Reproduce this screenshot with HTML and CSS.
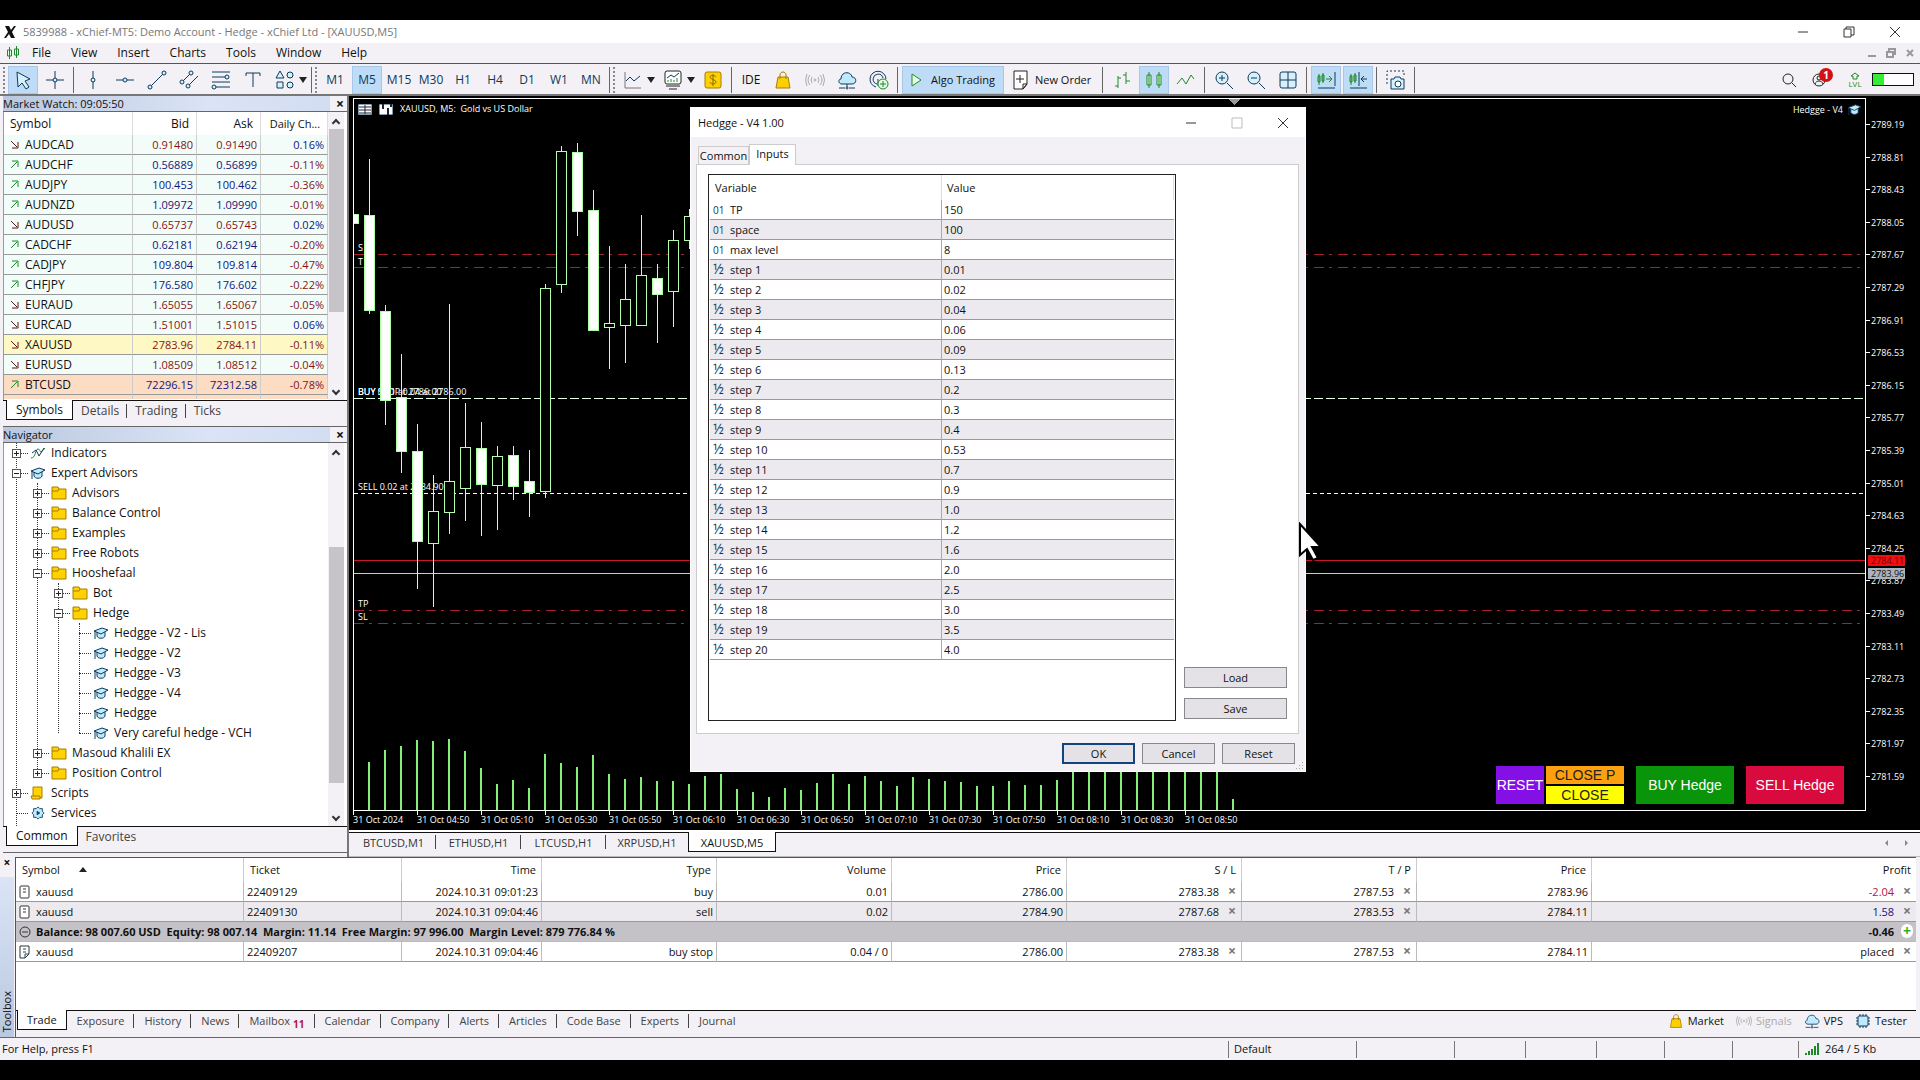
FILE: index.html
```
<!DOCTYPE html>
<html lang="en">
<head>
    <meta charset="UTF-8">
    <meta name="viewport" content="width=device-width, initial-scale=1.0">
    <title>5839988 - xChief-MT5: Demo Account - Hedge</title>
    <link rel="stylesheet" href="styles.css">
</head>
<body>
    <!-- Icon sprite -->
    <svg class="sprite" aria-hidden="true">
        <symbol id="i-logo" viewBox="0 0 12 14"><path d="M1 1h4l2 4 3-4h2L8 7l3 6H7L5 9l-3 4H0l4-6z" fill="#111"/></symbol>
        <symbol id="i-candles" viewBox="0 0 14 14"><path d="M3.500 1v12M10.500 0v12M1.500 4h4v6h-4zM8.500 3h4v6h-4z" fill="#eafbe8" stroke="#1d8a2a"/></symbol>
        <symbol id="i-cursor" viewBox="0 0 20 20"><path d="M4 2l13 7-5 2 4 6-3 2-4-6-4 4z" fill="#d8f0fb"/></symbol>
        <symbol id="i-cross" viewBox="0 0 20 20"><path d="M10 1v18M1 10h18"/><circle cx="10" cy="10" r="2" fill="#d8f0fb"/></symbol>
        <symbol id="i-vline" viewBox="0 0 20 20"><path d="M10 1v18"/><circle cx="10" cy="10" r="2" fill="#d8f0fb"/></symbol>
        <symbol id="i-hline" viewBox="0 0 20 20"><path d="M1 10h18"/><circle cx="10" cy="10" r="2" fill="#d8f0fb"/></symbol>
        <symbol id="i-trend" viewBox="0 0 20 20"><path d="M4 16L16 4"/><circle cx="3" cy="17" r="2" fill="#d8f0fb"/><circle cx="17" cy="3" r="2" fill="#d8f0fb"/></symbol>
        <symbol id="i-channel" viewBox="0 0 20 20"><path d="M3 12l9-9M8 17L19 6"/><circle cx="3" cy="12" r="2" fill="#d8f0fb"/><circle cx="12" cy="3" r="2" fill="#d8f0fb"/><circle cx="9" cy="16" r="2" fill="#d8f0fb"/></symbol>
        <symbol id="i-fibo" viewBox="0 0 20 20"><path d="M1 2h18M1 7h14M1 12h18M4 17h15"/><circle cx="16" cy="7" r="2" fill="#d8f0fb"/><circle cx="3" cy="17" r="2" fill="#d8f0fb"/></symbol>
        <symbol id="i-text" viewBox="0 0 20 20"><path d="M3 6V3h14v3M10 3v14"/></symbol>
        <symbol id="i-shapes" viewBox="0 0 20 20"><path d="M5 1l4 7H1zM2 12h6v6H2z" fill="#d8f0fb"/><circle cx="15" cy="5" r="3" fill="#d8f0fb"/><circle cx="15" cy="15" r="3" fill="#d8f0fb"/></symbol>
        <symbol id="i-line" viewBox="0 0 20 20"><path d="M2 2v16h16" stroke="#777"/><path d="M3 11l4-4 4 4 6-5"/></symbol>
        <symbol id="i-template" viewBox="0 0 20 20"><rect x="2" y="1" width="16" height="13" rx="2" fill="#fff" stroke="#222"/><path d="M4 8l4-3 3 2 5-4"/><path d="M5 12v-2M8 12V9M11 12v-2M14 12V8" stroke="#1d8a2a"/><path d="M3 16h14M6 19h8" stroke="#222"/></symbol>
        <symbol id="i-dollar" viewBox="0 0 20 20"><rect x="2" y="2" width="16" height="16" rx="2" fill="#ffd000" stroke="#a87c00"/><path d="M13 7c-1-2-6-2-6 0s6 3 6 5-5 3-6 0M10 4v12" stroke="#8a6300"/></symbol>
        <symbol id="i-bag" viewBox="0 0 20 20"><path d="M5 7h10l2 11H3z" fill="#ffd000" stroke="#a87c00"/><path d="M7 9V5c0-4 6-4 6 0v4" stroke="#a87c00"/></symbol>
        <symbol id="i-signal" viewBox="0 0 20 20"><g stroke="#aaa"><circle cx="10" cy="10" r="1"/><path d="M7 7q-2 3 0 6M13 7q2 3 0 6M5 5q-4 5 0 10M15 5q4 5 0 10M2 4q-3 6 0 12M18 4q3 6 0 12"/></g></symbol>
        <symbol id="i-cloud" viewBox="0 0 20 20"><path d="M5 14c-4 0-4-5-1-5 0-8 10-8 11-2 5 0 5 7 0 7z" fill="#bfeafd"/><path d="M10 14v3M2 18h6M12 18h6"/><circle cx="10" cy="18" r="1"/></symbol>
        <symbol id="i-antenna" viewBox="0 0 20 20"><path d="M7 17A8 8 0 1 1 17 9M8 14a5 5 0 1 1 6-6M9 16V9"/><circle cx="14" cy="14" r="5" fill="#e6fbe6" stroke="#1d8a2a"/><path d="M14 11v6M11 14h6" stroke="#1d8a2a"/></symbol>
        <symbol id="i-play" viewBox="0 0 20 20"><path d="M6 4l9 6-9 6z" fill="#eafbe8" stroke="#1d8a2a"/></symbol>
        <symbol id="i-neworder" viewBox="0 0 20 20"><path d="M4 1h13v13l-4 5H4z" fill="#fff" stroke="#222"/><path d="M17 14h-4v5zM10 5v8M6 9h8" stroke="#222"/></symbol>
        <symbol id="i-bars" viewBox="0 0 20 20"><path d="M6 6v12M3 16h3M6 8h3M14 2v12M11 5h3M14 11h4" stroke="#1d8a2a"/></symbol>
        <symbol id="i-candle" viewBox="0 0 20 20"><path d="M5 2v16M15 2v16M3 5h4v10H3zM13 5h4v10h-4z" fill="#eafbe8" stroke="#1d8a2a"/></symbol>
        <symbol id="i-wave" viewBox="0 0 20 20"><path d="M1 14l5-6 4 6 5-9 3 4" stroke="#1d8a2a"/></symbol>
        <symbol id="i-zoomin" viewBox="0 0 20 20"><circle cx="8" cy="8" r="6" fill="#d8f0fb"/><path d="M13 13l6 6M8 5v6M5 8h6"/></symbol>
        <symbol id="i-zoomout" viewBox="0 0 20 20"><circle cx="8" cy="8" r="6" fill="#d8f0fb"/><path d="M13 13l6 6M5 8h6"/></symbol>
        <symbol id="i-grid" viewBox="0 0 20 20"><rect x="2" y="2" width="16" height="16" rx="2" fill="#d8f0fb"/><path d="M10 2v16M2 10h16"/></symbol>
        <symbol id="i-shift" viewBox="0 0 20 20"><path d="M3 4v11M7 3v10M2 6h2v6H2zM6 5h2v6H6zM10 9h6M13 6l3 3-3 3" stroke="#1d8a2a"/><path d="M19 2v14M2 18h17"/></symbol>
        <symbol id="i-scroll" viewBox="0 0 20 20"><path d="M3 4v11M7 3v10M2 6h2v6H2zM6 5h2v6H6z" stroke="#1d8a2a"/><path d="M11 2v14M13 9h6M16 6l-3 3 3 3M2 18h17"/></symbol>
        <symbol id="i-camera" viewBox="0 0 20 20"><path d="M1 14V1h17v5" stroke-dasharray="2 2"/><path d="M5 9h3l1-2h5l1 2h3v10H5z" fill="#d8f0fb"/><circle cx="12" cy="14" r="3" fill="#fff"/></symbol>
        <symbol id="i-search" viewBox="0 0 16 16"><circle cx="7" cy="7" r="5" stroke="#222"/><path d="M11 11l4 4" stroke="#222"/></symbol>
        <symbol id="i-user" viewBox="0 0 16 16"><g stroke="#222"><circle cx="8" cy="8" r="6"/><circle cx="8" cy="6" r="2"/><path d="M4 12c1-4 7-4 8 0"/></g></symbol>
        <symbol id="i-level" viewBox="0 0 12 8"><path d="M4 7V4H2l4-3 4 3H8v3z" stroke="#1d8a2a"/></symbol>
        <symbol id="i-hat" viewBox="0 0 16 14"><path d="M4 6v4c1 3 7 3 8 0V6" fill="#bfeafd"/><path d="M1 5l8-3 6 2-7 4z" fill="#bfeafd"/><path d="M2 5v6M1 12h2"/></symbol>
        <symbol id="i-folder" viewBox="0 0 16 14"><path d="M1 1h6l1 2h7v10H1z" fill="#ffd200" stroke="#a87c00"/><path d="M1 5h6l1-2" stroke="#a87c00"/></symbol>
        <symbol id="i-indicator" viewBox="0 0 16 14"><path d="M1 12c5 0 4-9 7-9s1 7 7-1" stroke="#1d8a2a"/><path d="M2 7l4-3 3 6 5-8"/></symbol>
        <symbol id="i-script" viewBox="0 0 16 14"><path d="M3 1h9v11H3z" fill="#ffd200" stroke="#a87c00"/><path d="M1 10h9v3H2z" fill="#ffd200" stroke="#a87c00"/></symbol>
        <symbol id="i-gear" viewBox="0 0 16 16"><path d="M8 1l2 2h3v3l2 2-2 2v3h-3l-2 2-2-2H3v-3L1 8l2-2V3h3z" fill="#bfeafd"/><path d="M7 6l3 2-3 2z" fill="#14466b"/></symbol>
        <symbol id="i-chip" viewBox="0 0 16 16"><rect x="3" y="3" width="10" height="10" rx="1" fill="#bfeafd"/><path d="M5 3V1M8 3V1M11 3V1M5 15v-2M8 15v-2M11 15v-2M3 5H1M3 8H1M3 11H1M15 5h-2M15 8h-2M15 11h-2"/></symbol>
        <symbol id="i-doc" viewBox="0 0 12 14"><rect x="1" y="1" width="9" height="12" rx="1" fill="#fff" stroke="#333"/><path d="M4 4h3M4 7h3" stroke="#333"/></symbol>
        <symbol id="i-docpen" viewBox="0 0 12 14"><path d="M1 1h9v8l-4 4H1z" fill="#fff" stroke="#333"/><path d="M4 4h3M4 7h3M10 9H6v4" stroke="#14466b"/></symbol>
        <symbol id="i-up" viewBox="0 0 9 9"><path d="M1 8l6-6M2 1h6v6" stroke="#1d8a2a"/></symbol>
        <symbol id="i-down" viewBox="0 0 9 9"><path d="M1 1l6 6M8 2v6H2" stroke="#5c1414"/></symbol>
        <symbol id="i-signalbars" viewBox="0 0 16 12"><path d="M1 12v-2M4 12V8M7 12V6M10 12V3M13 12V0" stroke="#1d8a2a" stroke-width="2"/></symbol>
    </svg>

    <header class="titlebar">
        <svg class="ic12"><use href="#i-logo"/></svg>
        <span class="title">5839988 - xChief-MT5: Demo Account - Hedge - xChief Ltd - [XAUUSD,M5]</span>
        <div class="win-buttons">
            <button aria-label="Minimize"><svg viewBox="0 0 12 12"><path d="M1 6h10"/></svg></button>
            <button aria-label="Restore"><svg viewBox="0 0 12 12"><path d="M1 3h7v8H1zM3 3V1h8v8H8"/></svg></button>
            <button aria-label="Close"><svg viewBox="0 0 12 12"><path d="M1 1l10 10M11 1L1 11"/></svg></button>
        </div>
    </header>

    <nav class="menubar">
        <svg class="ic14"><use href="#i-candles"/></svg>
        <button>File</button>
        <button>View</button>
        <button>Insert</button>
        <button>Charts</button>
        <button>Tools</button>
        <button>Window</button>
        <button>Help</button>
        <div class="win-buttons small">
            <button aria-label="Minimize chart"><svg viewBox="0 0 12 12"><path d="M2 9h8"/></svg></button>
            <button aria-label="Restore chart"><svg viewBox="0 0 12 12"><path d="M2 5h6v5H2zM4 4V2h6v6"/></svg></button>
            <button aria-label="Close chart"><svg viewBox="0 0 12 12"><path d="M3 3l6 6M9 3L3 9"/></svg></button>
        </div>
    </nav>

    <div class="toolbar">
        <i class="grip first"></i>
        <button class="tool on" aria-label="Cursor"><svg><use href="#i-cursor"/></svg></button>
        <button class="tool" aria-label="Crosshair"><svg><use href="#i-cross"/></svg></button>
        <i class="sep"></i>
        <button class="tool" aria-label="Vertical line"><svg><use href="#i-vline"/></svg></button>
        <button class="tool" aria-label="Horizontal line"><svg><use href="#i-hline"/></svg></button>
        <button class="tool" aria-label="Trendline"><svg><use href="#i-trend"/></svg></button>
        <button class="tool" aria-label="Channel"><svg><use href="#i-channel"/></svg></button>
        <button class="tool" aria-label="Fibonacci"><svg><use href="#i-fibo"/></svg></button>
        <button class="tool" aria-label="Text"><svg><use href="#i-text"/></svg></button>
        <button class="tool split" aria-label="Shapes"><svg><use href="#i-shapes"/></svg></button>
        <i class="grip"></i>
        <button class="tool">M1</button>
        <button class="tool on">M5</button>
        <button class="tool">M15</button>
        <button class="tool">M30</button>
        <button class="tool">H1</button>
        <button class="tool">H4</button>
        <button class="tool">D1</button>
        <button class="tool">W1</button>
        <button class="tool">MN</button>
        <i class="grip"></i>
        <button class="tool split" aria-label="Indicators"><svg><use href="#i-line"/></svg></button>
        <button class="tool split" aria-label="Templates"><svg><use href="#i-template"/></svg></button>
        <button class="tool" aria-label="Deposit"><svg><use href="#i-dollar"/></svg></button>
        <i class="sep"></i>
        <button class="tool dark">IDE</button>
        <button class="tool" aria-label="Market"><svg><use href="#i-bag"/></svg></button>
        <button class="tool" aria-label="Signals"><svg><use href="#i-signal"/></svg></button>
        <button class="tool" aria-label="VPS"><svg><use href="#i-cloud"/></svg></button>
        <button class="tool" aria-label="Community"><svg><use href="#i-antenna"/></svg></button>
        <i class="sep"></i>
        <button class="tool wide on"><svg><use href="#i-play"/></svg>Algo Trading</button>
        <button class="tool wide"><svg><use href="#i-neworder"/></svg>New Order</button>
        <i class="sep"></i>
        <button class="tool" aria-label="Bars"><svg><use href="#i-bars"/></svg></button>
        <button class="tool on" aria-label="Candlesticks"><svg><use href="#i-candle"/></svg></button>
        <button class="tool" aria-label="Line"><svg><use href="#i-wave"/></svg></button>
        <i class="sep"></i>
        <button class="tool" aria-label="Zoom in"><svg><use href="#i-zoomin"/></svg></button>
        <button class="tool" aria-label="Zoom out"><svg><use href="#i-zoomout"/></svg></button>
        <button class="tool" aria-label="Tile windows"><svg><use href="#i-grid"/></svg></button>
        <i class="sep"></i>
        <button class="tool on" aria-label="Shift chart"><svg><use href="#i-shift"/></svg></button>
        <button class="tool on" aria-label="Auto scroll"><svg><use href="#i-scroll"/></svg></button>
        <i class="sep"></i>
        <button class="tool" aria-label="Screenshot"><svg><use href="#i-camera"/></svg></button>
        <i class="sep"></i>
        <div class="toolbar-right">
            <button class="plain" aria-label="Search"><svg class="ic16"><use href="#i-search"/></svg></button>
            <button class="plain account" aria-label="Account"><svg class="ic16"><use href="#i-user"/></svg><b class="badge">1</b></button>
            <span class="level"><svg><use href="#i-level"/></svg>LVL</span>
            <span class="battery"></span>
        </div>
    </div>

    <main class="workspace">
        <aside class="side">
            <section class="panel market">
                <div class="panel-title"><span>Market Watch: 09:05:50</span><button aria-label="Close">×</button></div>
                <div class="panel-body">
                    <table class="quotes">
                        <thead><tr><th>Symbol</th><th>Bid</th><th>Ask</th><th>Daily Ch...</th></tr></thead>
                        <tbody id="quotes"></tbody>
                    </table>
                    <div class="scrollbar"><i class="arrow up"></i><i class="thumb"></i><i class="arrow down"></i></div>
                </div>
                <div class="tabs"><button class="active">Symbols</button><button>Details</button><button>Trading</button><button>Ticks</button></div>
            </section>
            <section class="panel navigator">
                <div class="panel-title"><span>Navigator</span><button aria-label="Close">×</button></div>
                <div class="panel-body">
                    <ul class="tree" id="tree"></ul>
                    <div class="scrollbar"><i class="arrow up"></i><i class="thumb"></i><i class="arrow down"></i></div>
                </div>
                <div class="tabs"><button class="active">Common</button><button>Favorites</button></div>
            </section>
        </aside>

        <section class="chart-area">
            <div class="chart">
                <div class="plot">
                    <svg class="candles" id="candles">
                        <text x="4" y="152">S</text>
                        <text x="4" y="166">T</text>
                        <text x="4" y="296">BUY 0.01 at 2786.00</text>
                        <text x="4" y="296">BUY STOP 0.04 at 2786.00</text>
                        <text x="4" y="391">SELL 0.02 at 2784.90</text>
                        <text x="4" y="508">TP</text>
                        <text x="4" y="521">SL</text>
                        <line class="stop" x1="0" x2="100%" y1="155" y2="155"/>
                        <line class="stop" x1="0" x2="100%" y1="168" y2="168"/>
                        <line class="buy" x1="0" x2="100%" y1="299" y2="299"/>
                        <line class="sell" x1="0" x2="100%" y1="394" y2="394"/>
                        <line class="ask" x1="0" x2="100%" y1="461" y2="461"/>
                        <line class="bid" x1="0" x2="100%" y1="474" y2="474"/>
                        <line class="stop" x1="0" x2="100%" y1="511" y2="511"/>
                        <line class="stop" x1="0" x2="100%" y1="524" y2="524"/>
                        <path d="M874 0h12l-6 6z" fill="#999"/>
                    </svg>
                    <div class="volumes" id="volumes"></div>
                    <div class="chart-name">
                        <svg viewBox="0 0 14 11"><rect width="14" height="11" fill="#fff"/><path d="M1 3h12M1 6h12M1 9h12M7 1v9" stroke="#223"/></svg>
                        <svg viewBox="0 0 14 11"><rect width="14" height="11" fill="#fff"/><path d="M4 0v5M9 4v7M12 0v3" stroke="#223" stroke-width="2"/></svg>
                        <span>XAUUSD, M5:&nbsp; Gold vs US Dollar</span>
                    </div>
                    <div class="expert-name">Hedgge - V4 <svg><use href="#i-hat"/></svg></div>
                    <div class="trade-buttons">
                        <button class="reset">RESET</button>
                        <div class="stack">
                            <button class="close-p">CLOSE P</button>
                            <button class="close-all">CLOSE</button>
                        </div>
                        <button class="big buy-btn">BUY Hedge</button>
                        <button class="big sell-btn">SELL Hedge</button>
                    </div>
                </div>
                <div class="prices" id="prices"></div>
                <div class="times" id="times"></div>
            </div>

            <div class="chart-tabs">
                <button>BTCUSD,M1</button><button>ETHUSD,H1</button><button>LTCUSD,H1</button><button>XRPUSD,H1</button><button class="active">XAUUSD,M5</button>
                <div class="tab-arrows"><i class="left"></i><i class="right"></i></div>
            </div>

            <!-- Expert properties window -->
            <div class="dialog" role="dialog" aria-labelledby="dialogTitle">
                <div class="dialog-title">
                    <span id="dialogTitle">Hedgge - V4 1.00</span>
                    <div class="win-buttons">
                        <button aria-label="Minimize"><svg viewBox="0 0 12 12"><path d="M1 6h10"/></svg></button>
                        <button aria-label="Maximize" disabled><svg viewBox="0 0 12 12"><path d="M1 1h10v10H1z"/></svg></button>
                        <button aria-label="Close"><svg viewBox="0 0 12 12"><path d="M1 1l10 10M11 1L1 11"/></svg></button>
                    </div>
                </div>
                <div class="dialog-tabs"><button>Common</button><button class="active">Inputs</button></div>
                <div class="dialog-pane">
                    <div class="inputs-box">
                        <table class="inputs">
                            <thead><tr><th>Variable</th><th>Value</th></tr></thead>
                            <tbody id="inputs"></tbody>
                        </table>
                    </div>
                    <div class="pane-buttons"><button class="btn">Load</button><button class="btn">Save</button></div>
                </div>
                <div class="dialog-footer">
                    <button class="btn default">OK</button><button class="btn">Cancel</button><button class="btn">Reset</button>
                </div>
                <i class="resize"></i>
            </div>
            <svg class="pointer" viewBox="0 0 24 40"><path d="M2 2v31l7-6 6 11 5-2-6-11h9z" fill="#fff" stroke="#000" stroke-width="2"/></svg>
        </section>
    </main>

    <section class="toolbox">
        <div class="toolbox-title"><button aria-label="Close">×</button><span>Toolbox</span></div>
        <div class="toolbox-body">
            <table class="trades">
                <colgroup><col class="c-symbol"><col class="c-ticket"><col class="c-time"><col class="c-num"><col class="c-num"><col class="c-num"><col class="c-num"><col class="c-num"><col class="c-num"><col></colgroup>
                <thead><tr><th>Symbol <i class="sort"></i></th><th>Ticket</th><th>Time</th><th>Type</th><th>Volume</th><th>Price</th><th>S / L</th><th>T / P</th><th>Price</th><th>Profit</th></tr></thead>
                <tbody>
                    <tr><td><svg><use href="#i-doc"/></svg>xauusd</td><td>22409129</td><td>2024.10.31 09:01:23</td><td>buy</td><td>0.01</td><td>2786.00</td><td>2783.38 <button>×</button></td><td>2787.53 <button>×</button></td><td>2783.96</td><td><span class="neg">-2.04</span> <button>×</button></td></tr>
                    <tr class="alt"><td><svg><use href="#i-doc"/></svg>xauusd</td><td>22409130</td><td>2024.10.31 09:04:46</td><td>sell</td><td>0.02</td><td>2784.90</td><td>2787.68 <button>×</button></td><td>2783.53 <button>×</button></td><td>2784.11</td><td><span class="pos">1.58</span> <button>×</button></td></tr>
                    <tr class="balance"><td colspan="9"><svg viewBox="0 0 12 14"><circle cx="6" cy="7" r="5" stroke="#333"/><path d="M3 7h6" stroke="#333"/></svg>Balance: 98 007.60 USD&nbsp; Equity: 98 007.14&nbsp; Margin: 11.14&nbsp; Free Margin: 97 996.00&nbsp; Margin Level: 879 776.84 %</td><td>-0.46 <button class="add">+</button></td></tr>
                    <tr><td><svg><use href="#i-docpen"/></svg>xauusd</td><td>22409207</td><td>2024.10.31 09:04:46</td><td>buy stop</td><td>0.04 / 0</td><td>2786.00</td><td>2783.38 <button>×</button></td><td>2787.53 <button>×</button></td><td>2784.11</td><td>placed <button>×</button></td></tr>
                </tbody>
            </table>
            <div class="tabs">
                <button class="active">Trade</button><button>Exposure</button><button>History</button><button>News</button><button>Mailbox<sub>11</sub></button><button>Calendar</button><button>Company</button><button>Alerts</button><button>Articles</button><button>Code Base</button><button>Experts</button><button>Journal</button>
                <div class="services">
                    <a href="#"><svg><use href="#i-bag"/></svg>Market</a>
                    <a href="#" class="off"><svg><use href="#i-signal"/></svg>Signals</a>
                    <a href="#"><svg><use href="#i-cloud"/></svg>VPS</a>
                    <a href="#"><svg><use href="#i-chip"/></svg>Tester</a>
                </div>
            </div>
        </div>
    </section>

    <footer class="statusbar">
        <span class="help">For Help, press F1</span>
        <span class="profile">Default</span>
        <span class="cell w98"></span><span class="cell w71"></span><span class="cell w71"></span><span class="cell w68"></span><span class="cell w68"></span><span class="cell w66"></span>
        <span class="traffic"><svg><use href="#i-signalbars"/></svg>264 / 5 Kb</span>
    </footer>

    <script>
        // symbol, direction, bid, ask, daily change, row highlight
        const quotes = [
            ['AUDCAD', 'down', '0.91480', '0.91490', '0.16%'],
            ['AUDCHF', 'up', '0.56889', '0.56899', '-0.11%'],
            ['AUDJPY', 'up', '100.453', '100.462', '-0.36%'],
            ['AUDNZD', 'up', '1.09972', '1.09990', '-0.01%'],
            ['AUDUSD', 'down', '0.65737', '0.65743', '0.02%'],
            ['CADCHF', 'up', '0.62181', '0.62194', '-0.20%'],
            ['CADJPY', 'up', '109.804', '109.814', '-0.47%'],
            ['CHFJPY', 'up', '176.580', '176.602', '-0.22%'],
            ['EURAUD', 'down', '1.65055', '1.65067', '-0.05%'],
            ['EURCAD', 'down', '1.51001', '1.51015', '0.06%'],
            ['XAUUSD', 'down', '2783.96', '2784.11', '-0.11%', 'gold'],
            ['EURUSD', 'down', '1.08509', '1.08512', '-0.04%'],
            ['BTCUSD', 'up', '72296.15', '72312.58', '-0.78%', 'crypto']
        ];
        document.getElementById('quotes').innerHTML = quotes.map(([name, dir, bid, ask, change, mark]) => `
            <tr class="${mark || ''}">
                <td><svg><use href="#i-${dir}"/></svg>${name}</td>
                <td class="${dir}">${bid}</td><td class="${dir}">${ask}</td>
                <td class="${change[0] === '-' ? 'down' : 'up'}">${change}</td>
            </tr>`).join('') + '<tr class="crypto rest"><td></td><td></td><td></td><td></td></tr>';

        // Navigator tree: name, icon, children (null = collapsed, undefined = leaf)
        const tree = [
            ['Indicators', 'indicator', null],
            ['Expert Advisors', 'hat', [
                ['Advisors', 'folder', null],
                ['Balance Control', 'folder', null],
                ['Examples', 'folder', null],
                ['Free Robots', 'folder', null],
                ['Hooshefaal', 'folder', [
                    ['Bot', 'folder', null],
                    ['Hedge', 'folder', [
                        ['Hedgge - V2 - Lis', 'hat'],
                        ['Hedgge - V2', 'hat'],
                        ['Hedgge - V3', 'hat'],
                        ['Hedgge - V4', 'hat'],
                        ['Hedgge', 'hat'],
                        ['Very careful hedge - VCH', 'hat']
                    ]]
                ]],
                ['Masoud Khalili EX', 'folder', null],
                ['Position Control', 'folder', null]
            ]],
            ['Scripts', 'script', null],
            ['Services', 'gear']
        ];
        function renderNodes(nodes) {
            return nodes.map(([name, icon, children]) => {
                const toggle = children === undefined ? '<i class="leaf"></i>'
                    : `<button class="toggle ${children ? 'open' : ''}" aria-label="Toggle ${name}"></button><i class="dots"></i>`;
                const sub = children ? `<ul>${renderNodes(children)}</ul>` : '';
                return `<li><div class="node">${toggle}<svg><use href="#i-${icon}"/></svg>${name}</div>${sub}</li>`;
            }).join('');
        }
        document.getElementById('tree').innerHTML = renderNodes(tree);

        // Expert inputs
        const ints = [['TP', 150], ['space', 100], ['max level', 8]];
        const steps = ['0.01', '0.02', '0.04', '0.06', '0.09', '0.13', '0.2', '0.3', '0.4', '0.53', '0.7', '0.9', '1.0', '1.2', '1.6', '2.0', '2.5', '3.0', '3.5', '4.0'];
        document.getElementById('inputs').innerHTML =
            ints.map(([n, v]) => `<tr><td><i class="type">01</i>${n}</td><td>${v}</td></tr>`).join('') +
            steps.map((v, i) => `<tr><td><i class="type half">½</i>step ${i + 1}</td><td>${v}</td></tr>`).join('');

        // Candles: high, body top, body bottom, low, filled
        const STEP = 16;
        const candles = [
            [115, 115, 124, 124, 1], [60, 116, 211, 215, 1], [206, 212, 301, 326, 1], [255, 298, 352, 374, 1],
            [325, 352, 442, 490, 1], [376, 412, 444, 508, 0], [205, 382, 413, 435, 0], [304, 348, 389, 422, 0],
            [323, 349, 385, 437, 1], [347, 357, 386, 431, 0], [347, 356, 387, 401, 1], [351, 382, 393, 418, 1],
            [185, 189, 392, 399, 0], [47, 52, 185, 194, 0], [44, 53, 112, 137, 1], [91, 111, 231, 232, 1],
            [147, 224, 228, 270, 0], [165, 200, 226, 264, 0], [116, 176, 226, 226, 0], [165, 179, 195, 244, 1],
            [131, 141, 192, 228, 0], [110, 117, 141, 150, 0]
        ];
        document.getElementById('candles').innerHTML += candles.map(([h, t, b, l, filled], i) => {
            const x = (i - 1) * STEP + 15;
            return `<path class="wick" d="M${x} ${h}V${l}"/><rect class="${filled ? 'bear' : 'bull'}" x="${x - 5}" y="${t}" width="10" height="${b - t}"/>`;
        }).join('');

        const volumes = [48, 60, 64, 70, 69, 71, 59, 42, 26, 30, 22, 56, 47, 43, 55, 36, 31, 33, 29, 29, 26,
            34, 36, 21, 18, 13, 22, 20, 27, 36, 26, 34, 29, 24, 33, 31, 29, 28, 24, 24, 29, 25, 25, 30,
            45, 48, 52, 44, 50, 47, 55, 49, 46, 42, 11];
        document.getElementById('volumes').innerHTML = volumes.map(v => `<i style="height:${v}px"></i>`).join('');

        // Price scale
        let prices = '';
        for (let i = 0; i < 21; i++) prices += `<span>${(2789.19 - i * 0.38).toFixed(2)}</span>`;
        document.getElementById('prices').innerHTML = prices + '<b class="tag ask-tag">2784.11</b><b class="tag bid-tag">2783.96</b>';

        // Time scale, one label every 20 minutes
        let times = '<span>31 Oct 2024</span>';
        for (let m = 290; m <= 530; m += 20) {
            times += `<span>31 Oct 0${Math.floor(m / 60)}:${String(m % 60).padStart(2, '0')}</span>`;
        }
        document.getElementById('times').innerHTML = times;
    </script>
</body>
</html>
```
FILE: styles.css
```
* {
    box-sizing: border-box;
}
body {
    margin: 0;
    padding: 20px 0;
    min-height: 100vh;
    display: flex;
    flex-direction: column;
    background: #000;
    color: #111;
    font-family: "Open Sans", "Noto Sans", sans-serif;
    font-size: 11px;
    line-height: 16px;
    overflow-x: hidden;
}
button {
    font: inherit;
    color: inherit;
    background: none;
    border: 0;
    padding: 0;
    white-space: nowrap;
}
svg {
    fill: none;
    stroke: #0c3a5c;
    flex: none;
}
i {
    font-style: normal;
}
table {
    border-collapse: separate;
    border-spacing: 0;
    table-layout: fixed;
}
th {
    font-weight: normal;
    white-space: nowrap;
}
.sprite {
    position: absolute;
    width: 0;
    height: 0;
}
.ic12 { width: 12px; height: 14px; stroke: none; }
.ic14 { width: 14px; height: 14px; }
.ic16 { width: 16px; height: 16px; }

/* Title bar and menu */
.titlebar {
    height: 23px;
    background: #fff;
    display: flex;
    align-items: center;
    padding: 0 19px 0 4px;
    gap: 7px;
    color: #777;
}
.win-buttons {
    margin-left: auto;
    display: flex;
    gap: 34px;
}
.win-buttons svg {
    display: block;
    width: 12px;
    height: 12px;
    stroke: #333;
}
.win-buttons button:disabled svg {
    stroke: #bbb;
}
.menubar {
    height: 21px;
    background: #f3f1f5;
    border-bottom: 1px solid #555;
    display: flex;
    align-items: center;
    gap: 20px;
    padding: 0 4px 0 6px;
    font-size: 12px;
}
.menubar > svg {
    margin-right: -8px;
}
.win-buttons.small {
    gap: 7px;
}
.win-buttons.small svg {
    stroke: #999;
    stroke-width: 2;
}

/* Toolbar */
.toolbar {
    height: 32px;
    background: #f3f1f5;
    border-bottom: 2px solid #777;
    padding-top: 1px;
    display: flex;
    align-items: center;
    gap: 4px;
    color: #0c3a5c;
}
.tool {
    width: 28px;
    height: 26px;
    flex: none;
    display: flex;
    align-items: center;
    justify-content: center;
    font-size: 12px;
}
.tool svg {
    width: 20px;
    height: 20px;
}
.tool.on {
    background: #bfdcf7;
    outline: 1px solid #a5c8ec;
}
.tool.dark {
    color: #111;
}
.tool.split {
    width: 36px;
    padding-left: 4px;
    justify-content: flex-start;
    gap: 4px;
}
.tool.split::after {
    content: "";
    border: 4px solid transparent;
    border-top: 6px solid #222;
    border-bottom: 0;
}
.tool.wide {
    width: 100px;
    gap: 5px;
    color: #111;
    font-size: 11px;
    justify-content: flex-start;
    padding-left: 3px;
}
.tool.wide + .wide {
    width: 91px;
}
.sep {
    width: 1px;
    height: 26px;
    margin-right: 1px;
    background: #666;
}
.grip {
    width: 6px;
    height: 26px;
    border-left: 1px solid #666;
    border-right: 2px dotted #888;
}
.grip.first {
    border-left: 0;
    width: 5px;
}
.toolbar-right {
    margin-left: auto;
    display: flex;
    align-items: center;
    gap: 14px;
    padding-right: 6px;
}
.plain svg {
    display: block;
}
.account {
    position: relative;
}
.badge {
    position: absolute;
    left: 8px;
    top: -4px;
    width: 14px;
    height: 14px;
    border-radius: 7px;
    background: #d01212;
    color: #fff;
    font-size: 10px;
    line-height: 14px;
}
.level {
    display: flex;
    flex-direction: column;
    align-items: center;
    font-size: 8px;
    line-height: 8px;
    color: #1d8a2a;
    width: 16px;
    margin-left: 6px;
}
.level svg {
    width: 12px;
    height: 8px;
}
.battery {
    width: 42px;
    height: 13px;
    margin-left: -5px;
    border: 1px solid #111;
    background: linear-gradient(90deg, #33ee33 28%, #fff 28%);
}

/* Workspace */
.workspace {
    flex: 1;
    display: flex;
    background: #f3f1f5;
}
.side {
    width: 349px;
    flex: none;
    display: flex;
    flex-direction: column;
    border-right: 2px solid #777;
    padding: 0 0 4px 3px;
}
.panel {
    display: flex;
    flex-direction: column;
}
.market {
    height: 331px;
    border-bottom: 1px solid #666;
}
.navigator {
    flex: 1;
    border-bottom: 1px solid #666;
}
.panel-title {
    height: 16px;
    display: flex;
    align-items: center;
    justify-content: space-between;
    padding-right: 3px;
    background: linear-gradient(90deg, #b9c8e0, #dbe4f6 60%, #d3ddf2 95%, #f3f1f5 95%);
    border-bottom: 1px solid #666;
}
.panel-title button {
    font-size: 14px;
    line-height: 14px;
    font-weight: bold;
}
.panel-body {
    flex: 1;
    display: flex;
    overflow: hidden;
    background: #fff;
    border-left: 1px solid #999;
    padding-right: 3px;
}
.scrollbar {
    width: 16px;
    margin-left: auto;
    background: #f3f1f5;
    display: flex;
    flex-direction: column;
    align-items: center;
}
.scrollbar .arrow {
    width: 6px;
    height: 6px;
    border: solid #333;
    border-width: 2px 0 0 2px;
    transform: rotate(45deg);
    margin: 8px 0 3px;
}
.scrollbar .arrow.down {
    transform: rotate(225deg);
    margin: auto 0 6px;
}
.thumb {
    width: 15px;
    background: #c6c4c8;
}
.market .thumb {
    height: 183px;
}
.navigator .thumb {
    height: 236px;
    margin-top: 87px;
}
.quotes {
    width: 325px;
    align-self: flex-start;
}
.quotes th {
    height: 23px;
    font-size: 12px;
    text-align: right;
    padding: 0 7px 0 0;
    border-right: 1px solid #ddd;
}
.quotes th:first-child {
    width: 129px;
    text-align: left;
    padding-left: 6px;
}
.quotes th:nth-child(2),
.quotes th:nth-child(3) {
    width: 64px;
}
.quotes th:last-child {
    font-size: 11px;
}
.quotes td {
    height: 20px;
    padding: 0 3px;
    text-align: right;
    background: #f2fdf9;
    border-right: 1px solid #ccc;
    border-bottom: 1px solid #999;
}
.quotes td:first-child {
    text-align: left;
    font-size: 12px;
    padding-left: 6px;
}
.quotes .gold td { background: #fdf8c4; }
.quotes .crypto td { background: #fddcc4; }
.quotes .rest td { height: 4px; border-bottom: 0; }
.quotes svg {
    width: 9px;
    height: 9px;
    margin-right: 6px;
}
.quotes .up { color: #14147c; }
.quotes .down { color: #861414; }

/* Tab strips under the panels */
.tabs {
    height: 26px;
    display: flex;
    align-items: flex-start;
    border-top: 1px solid #111;
    padding-left: 3px;
    color: #444;
    font-size: 12px;
}
.tabs button {
    height: 20px;
    padding: 0 9px;
    position: relative;
}
.side .tabs button:not(.active) {
    padding: 0 8px;
}
.tabs button + button:not(:last-of-type)::after,
.toolbox .tabs button:not(.active)::after {
    content: "";
    position: absolute;
    right: 0;
    top: 3px;
    height: 14px;
    border-right: 1px solid #444;
}
.toolbox .tabs button:last-of-type::after {
    display: none;
}
.tabs button.active {
    background: #fff;
    color: #111;
    border: 1px solid #111;
    border-top: 0;
    margin-top: -1px;
}

/* Navigator tree */
.tree,
.tree ul {
    list-style: none;
    margin: 0;
    padding: 0;
    position: relative;
}
.tree {
    font-size: 12px;
    flex: 1;
}
.tree ul {
    margin-left: 21px;
}
.tree::before,
.tree ul::before {
    content: "";
    position: absolute;
    left: 12px;
    top: 0;
    bottom: 0;
    border-left: 1px dotted #333;
}
.tree ul::before {
    bottom: 10px;
}
.node {
    height: 20px;
    display: flex;
    align-items: center;
    padding-left: 8px;
    white-space: nowrap;
}
.node svg {
    width: 16px;
    height: 14px;
    margin: 0 5px 0 2px;
}
.toggle {
    position: relative;
    width: 9px;
    height: 9px;
    border: 1px solid #555;
    background: linear-gradient(#222, #222) 1px 3px / 5px 1px no-repeat, #fff;
}
.toggle:not(.open) {
    background: linear-gradient(#222, #222) 1px 3px / 5px 1px no-repeat, linear-gradient(#222, #222) 3px 1px / 1px 5px no-repeat, #fff;
}
.dots {
    width: 7px;
    border-top: 1px dotted #333;
}
.leaf {
    width: 12px;
    margin-left: 4px;
    border-top: 1px dotted #333;
}

/* Chart */
.chart-area {
    flex: 1;
    min-width: 0;
    display: flex;
    flex-direction: column;
    position: relative;
}
.chart {
    flex: 1;
    display: grid;
    grid-template-columns: 1fr 52px;
    grid-template-rows: 1fr 19px;
    background: #000;
    color: #fff;
    padding: 2px 2px 0 4px;
    font-size: 9px;
    line-height: 12px;
}
.plot {
    position: relative;
    border: 1px solid #fff;
    overflow: hidden;
}
.candles {
    display: block;
    width: 100%;
    height: 100%;
    position: absolute;
    shape-rendering: crispEdges;
}
.candles text {
    fill: #fff;
    stroke: none;
}
.candles path:not(.wick) { stroke: none; }
.candles .stop { stroke: #a82234; stroke-dasharray: 10 5 3 6; }
.candles .buy { stroke: #e8ffe8; stroke-dasharray: 9 3; }
.candles .sell { stroke: #fff; stroke-dasharray: 4 3; }
.candles .ask { stroke: #c81828; }
.candles .bid { stroke: #c4d0d0; }
.wick { stroke: #c4ffbe; }
.bear { fill: #fff; stroke: #a8ffa0; }
.bull { fill: #000; stroke: #b4ffae; }
.volumes {
    position: absolute;
    left: 14px;
    bottom: 0;
    display: flex;
    align-items: flex-end;
    gap: 14px;
}
.volumes i {
    width: 2px;
    background: #84f078;
}
.chart-name {
    position: absolute;
    left: 4px;
    top: 4px;
    display: flex;
    align-items: center;
    gap: 7px;
}
.chart-name svg {
    width: 14px;
    height: 11px;
}
.expert-name {
    position: absolute;
    right: 3px;
    top: 4px;
    display: flex;
    align-items: center;
    gap: 4px;
}
.expert-name svg {
    width: 15px;
    height: 13px;
}
.prices {
    position: relative;
    display: flex;
    flex-direction: column;
    justify-content: space-between;
    padding: 21px 0 28px;
}
.prices span::before {
    content: "";
    display: inline-block;
    width: 4px;
    margin-right: 1px;
    vertical-align: 3px;
    border-top: 1px solid #fff;
}
.tag {
    position: absolute;
    left: 2px;
    width: 37px;
    padding-left: 3px;
    height: 11px;
    line-height: 11px;
    font-weight: normal;
    color: #111;
}
.ask-tag { top: 457px; background: #ee1010; color: #700; }
.bid-tag { top: 470px; background: #aab4be; }
.times {
    grid-column: 1 / -1;
    display: flex;
    padding-top: 3px;
}
.times span {
    width: 64px;
    flex: none;
    white-space: nowrap;
    position: relative;
}
.times span::before {
    content: "";
    position: absolute;
    left: 0;
    top: -3px;
    height: 4px;
    border-left: 1px solid #fff;
}
.trade-buttons {
    position: absolute;
    right: 21px;
    bottom: 6px;
    height: 38px;
    display: flex;
    gap: 12px;
    font-family: "Liberation Sans", Arial, sans-serif;
    font-size: 14px;
    color: #fff;
}
.reset {
    width: 48px;
    margin-right: -10px;
    background: #8410e6;
}
.stack {
    width: 78px;
    display: flex;
    flex-direction: column;
    gap: 2px;
    color: #222;
}
.stack button {
    flex: 1;
}
.close-p { background: #fca010; }
.close-all { background: #ffff00; }
.big { width: 98px; }
.buy-btn { background: #0a940a; }
.sell-btn { background: #d80a3e; }

.chart-tabs {
    height: 27px;
    display: flex;
    align-items: flex-start;
    border-top: 2px solid #fff;
    border-bottom: 1px solid #bbb;
    padding: 0 12px 0 2px;
    font-size: 11px;
    color: #333;
    box-shadow: inset 0 1px #111;
}
.chart-tabs button {
    height: 20px;
    width: 85px;
    padding-top: 2px;
    text-align: center;
    background: linear-gradient(#444, #444) 100% 3px / 1px 14px no-repeat;
}
.chart-tabs button:nth-child(4) {
    width: 82px;
    background: none;
}
.chart-tabs button.active {
    width: 88px;
    background: #fff;
    color: #111;
    border: 1px solid #111;
    border-top: 0;
}
.tab-arrows {
    margin: 8px 0 0 auto;
    display: flex;
    gap: 17px;
}
.tab-arrows i {
    border: 3px solid transparent;
}
.tab-arrows .left { border-right-color: #888; border-left: 0; }
.tab-arrows .right { border-left-color: #888; border-right: 0; }

/* Expert properties window */
.dialog {
    position: absolute;
    left: 341px;
    top: 11px;
    width: 616px;
    height: 665px;
    background: #f3f1f5;
    border: 1px solid #fff;
    display: flex;
    flex-direction: column;
    padding: 0 6px 7px 5px;
}
.dialog-title {
    height: 29px;
    margin: 0 -6px 0 -5px;
    padding: 0 16px 0 7px;
    background: #fff;
    display: flex;
    align-items: center;
}
.dialog-tabs {
    height: 27px;
    padding-left: 2px;
    display: flex;
    align-items: flex-end;
}
.dialog-tabs button {
    height: 18px;
    width: 51px;
    border: 1px solid #ccc;
    border-bottom: 0;
}
.dialog-tabs .active {
    position: relative;
    height: 21px;
    width: 47px;
    margin-bottom: -1px;
    padding-bottom: 3px;
    background: #fff;
}
.dialog-pane {
    flex: 1;
    background: #fff;
    border: 1px solid #ccc;
    display: flex;
    padding: 9px 11px 12px 11px;
    gap: 8px;
}
.inputs-box {
    flex: 1;
    border: 1px solid #222;
    padding: 0 1px;
}
.inputs {
    width: 100%;
}
.inputs th {
    height: 25px;
    text-align: left;
    padding-left: 5px;
    border-right: 1px solid #ddd;
}
.inputs th:first-child {
    width: 232px;
}
.inputs td {
    height: 20px;
    padding: 0 0 0 3px;
    border-bottom: 1px solid #999;
    border-right: 1px solid #aaa;
}
.inputs td:last-child {
    padding-left: 2px;
    border-right: 0;
}
.inputs tr:nth-child(even) td {
    background: #eceaee;
}
.type {
    display: inline-block;
    width: 17px;
    font-size: 10px;
    color: #0c3a5c;
}
.half {
    font-size: 14px;
}
.pane-buttons {
    width: 103px;
    padding-bottom: 2px;
    display: flex;
    flex-direction: column;
    justify-content: flex-end;
    gap: 10px;
}
.btn {
    height: 21px;
    background: #e4e2e6;
    border: 1px solid #888;
}
.btn.default {
    border: 2px solid #12457f;
}
.dialog-footer {
    display: flex;
    justify-content: flex-end;
    gap: 7px;
    padding: 9px 4px 0 0;
}
.dialog-footer .btn {
    width: 73px;
}
.resize {
    position: absolute;
    right: 2px;
    bottom: 2px;
    width: 8px;
    height: 8px;
    background: radial-gradient(#aaa 1px, transparent 1px) 0 0 / 3px 3px;
    clip-path: polygon(100% 0, 100% 100%, 0 100%);
}
.pointer {
    position: absolute;
    left: 949px;
    top: 426px;
    width: 24px;
    height: 40px;
}

/* Toolbox */
.toolbox {
    height: 180px;
    display: flex;
    background: #f3f1f5;
}
.toolbox-title {
    width: 14px;
    margin-right: 1px;
    display: flex;
    flex-direction: column;
    align-items: center;
    justify-content: space-between;
    padding-bottom: 5px;
    background: linear-gradient(#f3f1f5 20px, #dbe4f6 20px, #b9c8e0);
}
.toolbox-title button {
    font-size: 12px;
    line-height: 12px;
    font-weight: bold;
}
.toolbox-title span {
    writing-mode: vertical-rl;
    transform: rotate(180deg);
    line-height: 14px;
}
.toolbox-body {
    flex: 1;
    min-width: 0;
    display: flex;
    flex-direction: column;
    justify-content: space-between;
    background: #fff;
    border-top: 1px solid #555;
    border-left: 1px solid #555;
    margin-right: 4px;
}
.trades {
    width: 100%;
}
.c-symbol { width: 228px; }
.c-ticket { width: 158px; }
.c-time { width: 140px; }
.c-num { width: 175px; }
.trades th {
    height: 24px;
    padding: 0 5px 0 6px;
    text-align: right;
    border-right: 1px solid #ccc;
}
.trades td {
    height: 20px;
    padding: 0 3px;
    text-align: right;
    white-space: nowrap;
    border-right: 1px solid #bbb;
    border-bottom: 1px solid #999;
}
.trades th:nth-child(-n+2),
.trades td:nth-child(-n+2):not(:last-child) {
    text-align: left;
}
.trades tr:not(.balance) td:nth-child(3) {
    text-align: right;
}
.trades th:last-child,
.trades td:last-child {
    border-right: 0;
}
.trades svg {
    width: 12px;
    height: 14px;
    margin-right: 5px;
    vertical-align: -3px;
}
.trades button {
    width: 12px;
    margin-left: 4px;
    color: #777;
    font-size: 14px;
    line-height: 14px;
    font-weight: bold;
}
.trades .alt td { background: #eceaee; }
.trades .balance td {
    background: #c4c2c6;
    font-weight: bold;
    border-right: 0;
    border-bottom-color: #bbb;
}
.trades .balance .add {
    background: #fff;
    border-radius: 7px;
    color: #38b018;
}
.neg { color: #b01840; }
.pos { color: #14147c; }
.sort {
    display: inline-block;
    margin: 0 0 2px 16px;
    border: 4px solid transparent;
    border-bottom: 5px solid #222;
    border-top: 0;
}
.toolbox .tabs {
    height: 27px;
    background: #f3f1f5;
    padding-left: 1px;
    font-size: 11px;
}
.toolbox .tabs button:not(.active) {
    padding: 0 10px;
}
.toolbox sub {
    color: #b01840;
    font-size: 10px;
    font-weight: bold;
    line-height: 0;
    margin-left: 3px;
}
.services {
    margin-left: auto;
    display: flex;
    gap: 12px;
    padding: 2px 9px 0 0;
}
.services a {
    display: flex;
    align-items: center;
    gap: 4px;
    color: #111;
    text-decoration: none;
}
.services .off { color: #aaa; }
.services svg {
    width: 16px;
    height: 16px;
}

/* Status bar */
.statusbar {
    height: 23px;
    display: flex;
    align-items: center;
    background: #f3f1f5;
    border-top: 1px solid #666;
    padding-left: 2px;
}
.statusbar span {
    height: 17px;
}
.help { flex: 1; }
.profile,
.cell,
.traffic {
    border-left: 1px solid #777;
}
.profile {
    width: 128px;
    padding-left: 5px;
}
.w98 { width: 98px; }
.w71 { width: 71px; }
.w68 { width: 68px; }
.w66 { width: 66px; }
.traffic {
    width: 122px;
    padding-left: 6px;
}
.traffic svg {
    width: 16px;
    height: 12px;
    margin-right: 4px;
    vertical-align: -2px;
}
```
